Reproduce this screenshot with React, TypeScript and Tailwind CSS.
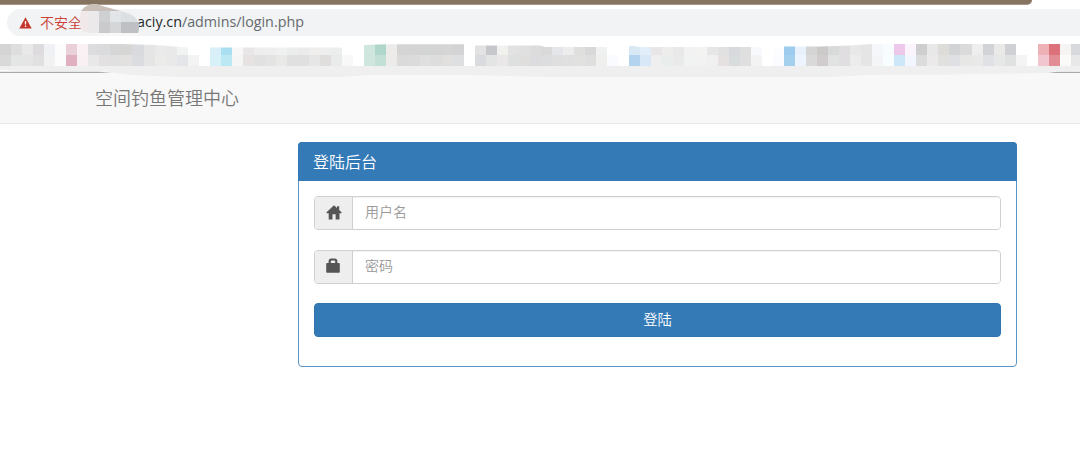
import React from 'react';

const CELL = 11.04;

const TOP_ROW =
  'd4d4d4 dedede e8e8e9 dddbdd f0f1f4 fcfcfc ead0d9 faf1f4 dcdcde dadbdc d6d6d6 d6d6d5 d8dadd e5e5e5 eaeaea e9e9e9 f2f4f3 ffffff ffffff d8eff8 a9dff1 f7f7f7 e8e6e6 eeeeee eeeeee eff1f0 eceded ebebeb efeeec eeeeef eceeed ffffff ffffff cfe6df aed6ca ecebea d4d4d5 d4d4d4 d3d4d4 d4d4d4 d5d5d5 d3d3d5 ffffff e2e2e2 c6c7ca f1f2ee e2e2e2 e0e0e1 dcdcdd d9d9d9 e5e6e9 ededed dfdfde d8d8d8 f0f2f2 ffffff ffffff d8e8f4 e2eefa e9e6e7 ededeb e8e8e8 f2f2f3 f3f3f2 e6e6e7 e2e1e1 d8d9dd dedfde f8f9fc ffffff fcfdff 9dcbed e9f2fc d4d4d4 cccac9 d8dada e0dee0 e8e8e8 e5e5e5 f5f7fa f9fcff eec8ea fcf4fd cecece e8e8e8 dedcd9 d2d3d5 dadada eeeeee d2d3d7 e9eae7 d0d1d4 ffffff ffffff edb1b6 dd717a f5f4f2 d7d9dd'.split(' ');

const BOTTOM_ROW =
  'd9d9d9 e3e6e5 e5e5e5 e0e0e0 f2f2f2 fcfcfc e0b0c1 f8f0f3 e8e8e8 e2e0e1 e0e0e0 e2e1df dadce0 e5e5e5 ebebea e9e9e9 e3e5e8 f3f3f3 ffffff d8f0f8 bce8f4 f5f5f5 e6e2e2 e1e1e1 e3e3e4 e9e9e7 e0e0e0 e0e0e1 e6e6e6 e0dedc e9ebea f8f8f8 ffffff cfe6df c2e0d6 ecebea dadada dbdbdb dfdfdf dddddd e1e0de dedfe1 ffffff d9dbde e2e5e4 e9e7e7 dedfdf e0dedc dcdcdf dcdddf dfdfdf e0e0e0 e1e1e0 dfdfdf efefee fafbff ffffff b4d3ee d8e8f7 efeff0 e9edec eaeaea f0f3f2 f2f2f2 f0f0f0 e4e1e0 d9dcdc dedfde f3f3f3 ffffff fafcff a5d0ed eef4fd d9d9d9 d0cccd e0e3e1 e0dee0 ececec e5e5e5 f3f5f6 f8fdff cee7f8 f2f7ff dcdcdc ebe9ea e0e0df dfe0e3 e7e7e5 e9e9e9 e0e1e4 e5e8e7 e0e1e1 f4f4f4 ffffff f1c6ce e28c96 fafaf8 e8e8e9'.split(' ');

function BookmarkStrip() {
  return (
    <svg className="relative z-10 block h-[37px] w-full shrink-0 overflow-visible" viewBox="0 36 1080 37">
      <rect x="0" y="36" width="1080" height="37" fill="#fff" />
      <g shapeRendering="crispEdges">
        {TOP_ROW.map((c, i) => (
          <rect key={i} x={i * CELL} y="44" width={CELL + 0.2} height="11" fill={'#' + c} />
        ))}
        {BOTTOM_ROW.map((c, i) => (
          <rect key={i} x={i * CELL} y="55" width={CELL + 0.2} height="11.4" fill={'#' + c} />
        ))}
      </g>
      <path d="M120 43V44L155 45L188 47.5H363V45L386 44.3H464V45.5H540L545 47H627V46H633L640 47H783V46.5H820L850 45.5L872 44V43Z" fill="#fff" />
      <path d="M0 72H1080V74H0Z" fill="#f8f8f8" />
      <path d="M0 66H1080V71H1060L1045 73L950 74.5L870 75L830 77H550L470 75H370L340 77H180L130 75L105 71.5L20 71L0 70Z" fill="#efefef" />
      <path d="M0 71.7H98L112 72.4L98 73H0ZM1048 72.7L1058 71.7H1080V73H1054Z" fill="#a9a9a9" />
    </svg>
  );
}

function HostSmudge() {
  return (
    <svg className="absolute left-[72px] top-0 h-[42px] w-[70px]" viewBox="72 0 70 42">
      <defs>
        <clipPath id="smudge">
          <path d="M80 25V15C82 6 88 4 97 4.5L124 12C133 14 139 19 139 27C139 36 134 41 125 41C108 39 99 33 88 33Q80 31 80 25Z" />
        </clipPath>
      </defs>
      <g clipPath="url(#smudge)">
        <rect x="72" y="0" width="70" height="42" fill="#f7f7f8" />
        <path d="M72 0H142V11H72Z" fill="#c9bfb8" />
        <path d="M77 11H88V33H77Z" fill="#f1e8e9" />
        <path d="M88 11H99V33H88Z" fill="#ebe9e9" />
        <path d="M99 11H110V22H99Z" fill="#ced0d1" />
        <path d="M110 11H121V22H110Z" fill="#e1e5e7" />
        <path d="M121 11H142V22H121Z" fill="#dce0e3" />
        <path d="M99 22H110V33H99Z" fill="#cacacc" />
        <path d="M110 22H121V33H110Z" fill="#d5d6d8" />
        <path d="M121 22H142V33H121Z" fill="#bec0c4" />
      </g>
    </svg>
  );
}

function HomeIcon() {
  return (
    <svg className="mb-[2px] h-[15px] w-[16px]" viewBox="0 0 16 15" fill="#555">
      <path d="M8 .2 11 3V1.2H13.2V5L15.8 7.6 15.2 8.3H13.5V14.5H9.6V9.3H6.5V14.5H2.7V8.3H.9L.3 7.6Z" />
    </svg>
  );
}

function LockIcon() {
  return (
    <svg className="mb-[3px] mr-[2px] h-[15px] w-[14px]" viewBox="0 0 14 15" fill="#555">
      <path fillRule="evenodd" d="M2.6 5V3.2C2.6 1.4 3.6.4 5.4.4H8.6C10.4.4 11.4 1.4 11.4 3.2V5H13Q13.8 5 13.8 5.8V13.9Q13.8 14.7 13 14.7H1Q.2 14.7.2 13.9V5.8Q.2 5 1 5ZM4.8 5H9.2V3.6Q9.2 2.6 8.2 2.6H5.8Q4.8 2.6 4.8 3.6Z" />
    </svg>
  );
}

function Field({ icon, label, type }: { icon: React.ReactNode; label: string; type: string }) {
  return (
    <div className="flex h-[34px] rounded-[4px] border border-[#d0d0d0]">
      <span className="flex w-[38px] shrink-0 items-center justify-center rounded-l-[3px] border-r border-[#d0d0d0] bg-[#eee]">{icon}</span>
      <input
        type={type}
        placeholder={label}
        className="min-w-0 flex-1 rounded-r-[3px] bg-white px-[12px] pb-[3px] text-[14px] shadow-[inset_0_1px_1px_rgba(0,0,0,0.05)] outline-none placeholder:text-[#999]"
      />
    </div>
  );
}

export default function App() {
  return (
    <div className="relative flex h-[450px] w-[1080px] flex-col overflow-hidden bg-white font-['Noto_Sans_CJK_SC',sans-serif] font-[350]">
      <div className="h-[5px] w-[1032px] shrink-0 rounded-br-[5px] border-b border-[#a4968a] bg-[#877460]" />
      <div className="flex h-[31px] shrink-0 pl-[7px] pt-[4px]">
        <div className="flex h-[27px] flex-1 items-center rounded-l-full bg-[#f1f3f4] pl-[12px]">
          <svg className="h-[12px] w-[13px]" viewBox="0 0 13 12">
            <path d="M6.5 .3 12.7 11.5H.3Z" fill="#c5352b" />
            <path d="M6.5 4V7.6M6.5 8.6V10" stroke="#fff" strokeWidth="1.3" />
          </svg>
          <span className="ml-[8px] w-[97px] whitespace-nowrap pb-[2px] text-[14px] leading-none text-[#cc4038]">不安全</span>
          <span className="whitespace-nowrap font-['Open_Sans',sans-serif] text-[14.3px] font-normal leading-none text-[#66696d]">
            <span className="text-[#25272a]">aciy.cn</span>/admins/login.php
          </span>
        </div>
      </div>
      <BookmarkStrip />
      <nav className="flex h-[51px] shrink-0 items-center border-b border-[#e7e7e7] bg-[#f8f8f8] pb-[3px] pl-[95px]">
        <span className="text-[18px] leading-none text-[#777]">空间钓鱼管理中心</span>
      </nav>
      <main className="ml-[298px] mt-[18px] h-[225px] w-[719px] shrink-0 rounded-[4px] border border-[#5b95c8] bg-white">
        <h1 className="-mx-px -mt-px flex h-[39px] items-center rounded-t-[4px] bg-[#337ab7] pb-px pl-[15px] text-[16px] leading-none text-white">登陆后台</h1>
        <form className="flex flex-col gap-[20px] px-[15px] pt-[15px]" onSubmit={(e) => e.preventDefault()}>
          <Field icon={<HomeIcon />} label="用户名" type="text" />
          <Field icon={<LockIcon />} label="密码" type="password" />
          <button className="-mt-px flex h-[34px] items-center justify-center rounded-[4px] border border-[#3474ae] bg-[#337ab7] pb-px text-[14.3px] leading-none text-white">登陆</button>
        </form>
      </main>
      <HostSmudge />
    </div>
  );
}
